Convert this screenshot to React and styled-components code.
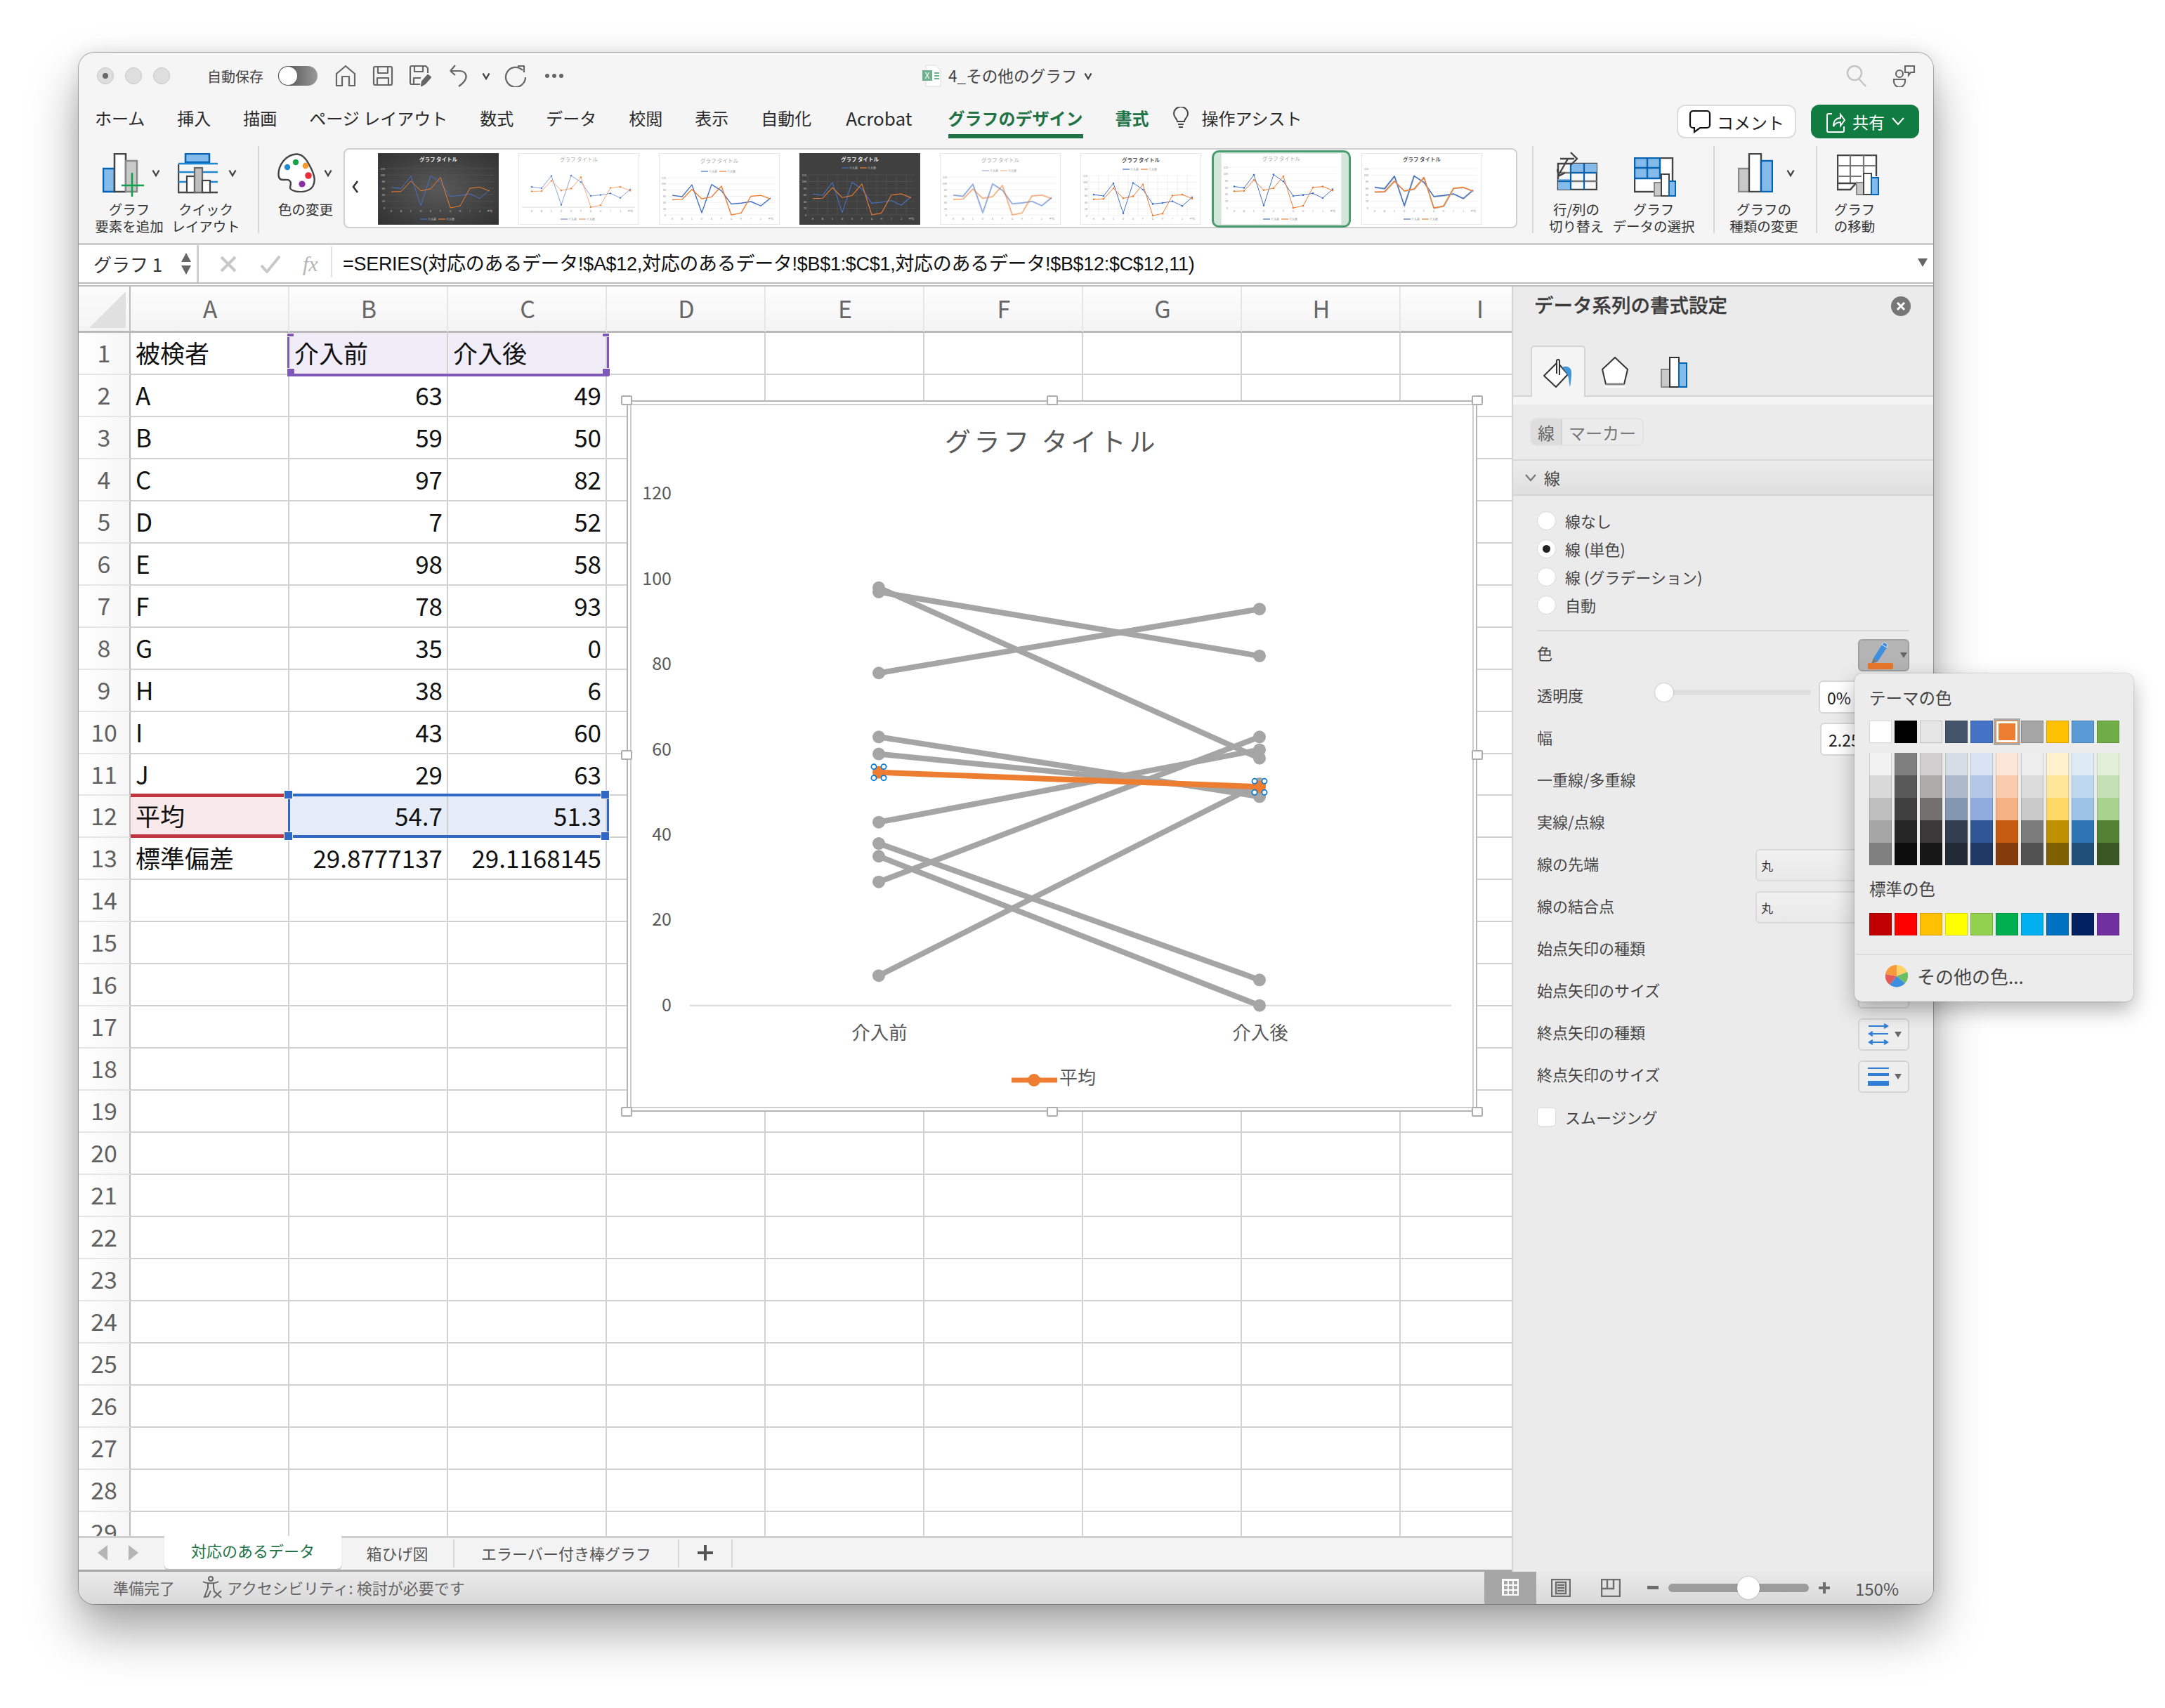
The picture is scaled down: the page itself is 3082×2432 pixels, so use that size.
import React from 'react';
import styled, { createGlobalStyle } from 'styled-components';

const GlobalStyle = createGlobalStyle`
  html, body {
    margin: 0;
    padding: 0;
    background: #fff;
    font-family: "Noto Sans CJK JP", "Noto Sans", sans-serif;
    color: #333;
  }
  * { box-sizing: border-box; }
`;

const Page = styled.div`
  width: 3082px;
  height: 2432px;
  padding: 75px 0 0 112px;
  overflow: hidden;
`;

const Window = styled.div`
  position: relative;
  width: 2640px;
  height: 2209px;
  display: flex;
  flex-direction: column;
  background: #f5f5f5;
  border-radius: 22px;
  box-shadow: 0 38px 70px rgba(0, 0, 0, 0.36), 0 0 24px rgba(0, 0, 0, 0.1), 0 0 0 1px #b9b9b9;
`;

/* title bar */
const TitleBar = styled.div`
  height: 66px;
  flex: none;
  display: flex;
  align-items: center;
  padding: 0 0 0 26px;
  position: relative;
`;

const Lights = styled.div`
  display: flex;
  gap: 16px;
`;

const Light = styled.span`
  width: 24px;
  height: 24px;
  border-radius: 50%;
  background: #dedede;
  border: 1px solid #c4c4c4;
  display: flex;
  align-items: center;
  justify-content: center;
  &::after {
    content: '';
    width: 8px;
    height: 8px;
    border-radius: 50%;
    background: ${(p) => (p.$dot ? '#666' : 'transparent')};
  }
`;

const AutoSave = styled.span`
  margin-left: 53px;
  font-size: 20px;
  color: #444;
`;

const Toggle = styled.span`
  margin-left: 21px;
  width: 56px;
  height: 28px;
  border-radius: 14px;
  background: linear-gradient(90deg, #444, #999);
  padding: 1px;
  display: flex;
  &::before {
    content: '';
    width: 26px;
    height: 26px;
    border-radius: 50%;
    background: #fff;
  }
`;

const QuickIcon = styled.span`
  display: flex;
  margin-left: ${(p) => p.$ml || 0}px;
  svg { display: block; }
`;

const DocTitle = styled.div`
  position: absolute;
  left: 1200px;
  top: 16px;
  display: flex;
  align-items: center;
  gap: 10px;
  font-size: 22.6px;
  color: #444;
  white-space: nowrap;
`;

const TitleRight = styled.div`
  margin-left: auto;
  display: flex;
  align-items: center;
  gap: 36px;
  padding-right: 24px;
`;

/* tabs */
const TabRow = styled.div`
  height: 55px;
  flex: none;
  display: flex;
  align-items: flex-start;
  gap: 46px;
  padding: 8px 20px 0 23px;
  position: relative;
`;

const RibbonTab = styled.span`
  font-size: ${(p) => p.$size || 24}px;
  line-height: 38px;
  height: 48px;
  margin-left: ${(p) => p.$ml || 0}px;
  white-space: nowrap;
  color: ${(p) => (p.$green ? '#217346' : '#2a2a2a')};
  font-weight: ${(p) => (p.$green ? 700 : 400)};
  border-bottom: ${(p) => (p.$active ? '6px solid #217346' : '0')};
`;

const Assist = styled.span`
  display: flex;
  align-items: center;
  gap: 18px;
  font-size: 24px;
  line-height: 38px;
  color: #2a2a2a;
  margin-left: -13px;
  svg { display: block; }
`;

const RightButtons = styled.div`
  margin-left: auto;
  display: flex;
  gap: 21px;
`;

const CommentButton = styled.div`
  width: 170px;
  height: 48px;
  background: #fff;
  border: 2px solid #dcdcdc;
  border-radius: 12px;
  display: flex;
  align-items: center;
  justify-content: center;
  gap: 8px;
  font-size: 24px;
  color: #222;
`;

const ShareButton = styled.div`
  width: 154px;
  height: 48px;
  background: #107c41;
  border-radius: 12px;
  display: flex;
  align-items: center;
  justify-content: center;
  gap: 10px;
  font-size: 23px;
  color: #fff;
`;

/* ribbon */
const Ribbon = styled.div`
  height: 153px;
  flex: none;
  display: flex;
  padding: 12px 0 0 22px;
  border-bottom: 3px solid #cdcdcd;
`;

const RibbonBtn = styled.div`
  width: ${(p) => p.$w}px;
  margin-left: ${(p) => p.$ml || 0}px;
  flex: none;
  display: flex;
  flex-direction: column;
  align-items: center;
`;

const IconZone = styled.div`
  width: 100%;
  height: 78px;
  padding: ${(p) => p.$top || 10}px 0 0 ${(p) => p.$left}px;
  display: flex;
  align-items: flex-start;
  svg { display: block; flex: none; }
`;

const Caret = styled.span`
  display: block;
  margin: 22px 0 0 ${(p) => p.$ml}px;
  width: 12px;
  height: 12px;
  svg { display: block; }
`;

const RibbonLabel = styled.div`
  font-size: 19.5px;
  line-height: 24px;
  text-align: center;
  color: #333;
  white-space: nowrap;
`;

const RibbonSep = styled.div`
  width: 2px;
  height: 124px;
  background: #d8d8d8;
  margin-left: ${(p) => p.$ml}px;
  flex: none;
`;

const Gallery = styled.div`
  flex: none;
  width: 1671px;
  height: 114px;
  margin: 3px 0 0 4px;
  background: #fff;
  border: 2px solid #cfcfcf;
  border-radius: 8px;
  display: flex;
  gap: 28px;
  padding-top: 5px;
`;

const GalleryPrev = styled.div`
  width: 47px;
  margin-right: -28px;
  flex: none;
  display: flex;
  align-items: center;
  justify-content: center;
  padding-right: 18px;
  padding-bottom: 10px;
  svg { display: block; }
`;

const ThumbSlot = styled.div`
  width: ${(p) => (p.$selected ? 198 : 172)}px;
  height: ${(p) => (p.$selected ? 110 : 102)}px;
  margin: ${(p) => (p.$selected ? '-4px -13px 0' : '0')};
  padding: ${(p) => (p.$selected ? '1px 10px' : '0')};
  background: ${(p) => (p.$selected ? '#d2e6da' : 'transparent')};
  border: ${(p) => (p.$selected ? '3px solid #4a9b6f' : '0')};
  border-radius: ${(p) => (p.$selected ? '10px' : '0')};
  flex: none;
  svg { display: block; }
`;

/* formula bar */
const FormulaBar = styled.div`
  height: 59px;
  flex: none;
  display: flex;
  background: #fff;
  border-bottom: 6px double #bdbdbd;
`;

const NameBox = styled.div`
  width: 171px;
  flex: none;
  display: flex;
  align-items: center;
  justify-content: space-between;
  padding: 0 8px 0 21px;
  font-size: 26px;
  color: #333;
  border-right: 3px solid #cfcfcf;
  white-space: nowrap;
`;

const Spinner = styled.span`
  display: flex;
  flex-direction: column;
  gap: 5px;
  svg { display: block; }
`;

const FormulaTools = styled.div`
  flex: none;
  width: 188px;
  padding-left: 30px;
  display: flex;
  align-items: center;
  gap: 33px;
  color: #c8c8c8;
  svg { display: block; }
`;

const FxMark = styled.span`
  font-family: "Liberation Serif", serif;
  font-style: italic;
  font-size: 30px;
  color: #b5b5b5;
  margin-left: -2px;
`;

const FormulaText = styled.div`
  flex: 1;
  display: flex;
  align-items: center;
  padding-left: 15px;
  border-left: 2px solid #e4e4e4;
  height: 44px;
  margin-top: 2px;
  font-family: "Liberation Sans", "Noto Sans CJK JP", sans-serif;
  font-size: 27px;
  letter-spacing: -0.3px;
  color: #111;
  white-space: nowrap;
  position: relative;
`;

const FormulaArrow = styled.span`
  position: absolute;
  right: 8px;
  top: 17px;
  width: 0;
  height: 0;
  border-left: 7px solid transparent;
  border-right: 7px solid transparent;
  border-top: 12px solid #666;
`;

/* main */
const Main = styled.div`
  flex: 1;
  display: flex;
  min-height: 0;
`;

const SheetColumn = styled.div`
  width: 2040px;
  flex: none;
  display: flex;
  flex-direction: column;
`;

const SheetArea = styled.div`
  position: relative;
  height: 1779px;
  flex: none;
  overflow: hidden;
  background: #fff;
`;

const CellGrid = styled.div`
  display: grid;
  grid-template-columns: 74px repeat(9, 226px);
  grid-template-rows: 66px;
  grid-auto-rows: 59.96px;
`;

const Corner = styled.div`
  background: linear-gradient(#fbfbfb, #f4f4f4);
  border-right: 2px solid #bdbdbd;
  border-bottom: 3px solid #b9b9b9;
  position: relative;
  &::after {
    content: '';
    position: absolute;
    right: 5px;
    bottom: 4px;
    width: 52px;
    height: 52px;
    background: #e0e0e0;
    clip-path: polygon(100% 0, 100% 100%, 0 100%);
  }
`;

const ColHead = styled.div`
  background: linear-gradient(#fdfdfd, #f4f4f4);
  border-right: 2px solid #e6e6e6;
  border-bottom: 3px solid #b9b9b9;
  display: flex;
  align-items: center;
  justify-content: center;
  padding: 0 0 2px 2px;
  font-size: 34px;
  color: #666;
`;

const RowHead = styled.div`
  background: linear-gradient(90deg, #fff, #f6f6f6);
  border-right: 2px solid #bdbdbd;
  border-bottom: 2px solid #e6e6e6;
  display: flex;
  align-items: center;
  justify-content: center;
  padding-bottom: 3px;
  font-size: 34px;
  color: #616161;
`;

const Cell = styled.div`
  background: ${(p) => p.$tint || '#fff'};
  border-right: 2px solid #d2d2d2;
  border-bottom: 2px solid #d2d2d2;
  display: flex;
  align-items: center;
  justify-content: ${(p) => (p.$num ? 'flex-end' : 'flex-start')};
  padding: 0 6px 3px 7px;
  font-size: 35px;
  color: #111;
  white-space: nowrap;
`;

const Range = styled.div`
  position: absolute;
  border-style: solid;
  border-color: ${(p) => p.$color};
  pointer-events: none;
`;

const RangeHandle = styled.span`
  position: absolute;
  width: ${(p) => p.$size}px;
  height: ${(p) => p.$h || p.$size}px;
  background: ${(p) => p.$color};
  outline: 1px solid #fff;
`;

/* chart */
const ChartFrame = styled.div`
  position: absolute;
  left: 780px;
  top: 162px;
  width: 1211px;
  height: 1013px;
  background: #fff;
  border: 2px solid #b4b4b4;
  padding: 3px;
`;

const ChartInner = styled.div`
  width: 100%;
  height: 100%;
  border: 2px solid #cfcfcf;
`;

const ChartSvg = styled.svg`
  position: absolute;
  left: -2px;
  top: -2px;
  display: block;
`;

const SizeHandle = styled.span`
  position: absolute;
  width: 16px;
  height: 14px;
  margin: -7px 0 0 -8px;
  background: #fff;
  border: 2px solid #adadad;
  border-radius: 2px;
`;

/* sheet tabs */
const SheetTabs = styled.div`
  flex: 1;
  display: flex;
  background: #f3f3f3;
  border-top: 3px solid #cfcfcf;
  border-bottom: 3px solid #a8a8a8;
`;

const TabArrows = styled.div`
  width: 122px;
  flex: none;
  display: flex;
  align-items: center;
  justify-content: center;
  gap: 30px;
  padding: 0 10px 4px 0;
`;

const SheetTab = styled.div`
  width: ${(p) => p.$w}px;
  flex: none;
  display: flex;
  align-items: center;
  justify-content: center;
  font-size: 22px;
  color: ${(p) => (p.$active ? '#217346' : '#555')};
  background: ${(p) => (p.$active ? '#fff' : 'transparent')};
  height: ${(p) => (p.$active ? '47px' : '40px')};
  margin-top: ${(p) => (p.$active ? '-3px' : '2px')};
  padding-bottom: ${(p) => (p.$active ? '8px' : '2px')};
  border-radius: ${(p) => (p.$active ? '0 0 6px 6px' : '0')};
  border-right: ${(p) => (p.$active ? '0' : '2px solid #d6d6d6')};
  box-shadow: ${(p) => (p.$active ? '0 2px 1px #bdbdbd' : 'none')};
  white-space: nowrap;
`;

/* format panel */
const Panel = styled.div`
  width: 600px;
  flex: none;
  position: relative;
  background: #ebebeb;
  border-left: 2px solid #d2d2d2;
  display: flex;
  flex-direction: column;
`;

const PanelHead = styled.div`
  height: 84px;
  flex: none;
  display: flex;
  justify-content: space-between;
  padding: 5px 32px 0 30px;
  font-size: 27.5px;
  font-weight: 500;
  color: #3a3a3a;
  -webkit-text-stroke: 0.3px #3a3a3a;
`;

const CloseDot = styled.span`
  width: 28px;
  height: 28px;
  margin-top: 9px;
  border-radius: 50%;
  background: #777;
  display: flex;
  svg { display: block; }
`;

const PanelTabs = styled.div`
  height: 84px;
  flex: none;
  display: flex;
  align-items: flex-start;
  padding-left: 25px;
  border-bottom: 11px solid #f4f4f4;
  position: relative;
  &::after {
    content: '';
    position: absolute;
    left: 0;
    right: 0;
    top: 71px;
    height: 2px;
    background: #d4d4d4;
  }
`;

const PanelTab = styled.div`
  width: ${(p) => p.$w}px;
  height: 73px;
  display: flex;
  align-items: flex-start;
  justify-content: center;
  padding-top: 16px;
  position: relative;
  z-index: 1;
  background: ${(p) => (p.$active ? '#f4f4f4' : 'transparent')};
  border: ${(p) => (p.$active ? '2px solid #d4d4d4' : '0')};
  border-bottom: 0;
  border-radius: 5px 5px 0 0;
  svg { display: block; }
`;

const Segment = styled.div`
  display: flex;
  align-self: flex-start;
  height: 40px;
  margin: 19px 0 0 24px;
  border: 2px solid #e2e2e2;
  border-radius: 9px;
  overflow: hidden;
  font-size: 24px;
  color: #777;
`;

const SegmentItem = styled.span`
  display: flex;
  align-items: center;
  padding: 0 9px;
  background: ${(p) => (p.$on ? '#dddddd' : 'transparent')};
  color: ${(p) => (p.$on ? '#666' : '#777')};
  border-right: ${(p) => (p.$on ? '2px solid #d4d4d4' : '0')};
`;

const SectionBar = styled.div`
  height: 52px;
  margin-top: 19px;
  flex: none;
  display: flex;
  align-items: center;
  gap: 11px;
  padding-left: 17px;
  font-size: 23px;
  color: #444;
  background: linear-gradient(#ececec, #dfdfdf);
  border-top: 2px solid #d8d8d8;
  border-bottom: 2px solid #d4d4d4;
  svg { display: block; }
`;

const RadioList = styled.div`
  padding: 15px 0 0 34px;
  flex: none;
`;

const RadioRow = styled.div`
  height: 40px;
  display: flex;
  align-items: center;
  gap: 13px;
  font-size: 22px;
  color: #444;
`;

const Radio = styled.span`
  width: 27px;
  height: 27px;
  border-radius: 50%;
  background: #fff;
  border: 1px solid #d8d8d8;
  display: flex;
  align-items: center;
  justify-content: center;
  &::after {
    content: '';
    width: 11px;
    height: 11px;
    border-radius: 50%;
    background: ${(p) => (p.$on ? '#222' : 'transparent')};
  }
`;

const PanelDivider = styled.div`
  height: 2px;
  margin: 16px 34px 0;
  background: #d8d8d8;
  flex: none;
`;

const PropRow = styled.div`
  height: 60px;
  flex: none;
  display: flex;
  align-items: center;
  padding: 0 34px;
  font-size: 22px;
  color: #444;
  white-space: nowrap;
`;

const SliderTrack = styled.div`
  position: relative;
  width: 221px;
  height: 8px;
  margin: 0 0 6px 103px;
  background: #dedede;
  border-radius: 4px;
  &::before {
    content: '';
    position: absolute;
    left: -1px;
    top: -9px;
    width: 26px;
    height: 26px;
    border-radius: 50%;
    background: #fff;
    box-shadow: 0 0 2px rgba(0, 0, 0, 0.35);
  }
`;

const Field = styled.div`
  width: 127px;
  height: 47px;
  margin: 7px 0 0 ${(p) => (p.$after ? '11px' : 'auto')};
  background: #fff;
  border: 2px solid #d6d6d6;
  border-radius: 6px;
  display: flex;
  align-items: center;
  padding-left: 10px;
  font-size: 23px;
  color: #222;
`;

const SelectBox = styled.div`
  margin: 6px 0 0 auto;
  width: 219px;
  height: 46px;
  background: linear-gradient(#f1f1f1, #e9e9e9);
  border: 2px solid #dadada;
  border-radius: 6px;
  display: flex;
  align-items: center;
  padding-left: 6px;
  font-size: 17px;
  color: #333;
`;

const PickButton = styled.div`
  margin: 8px 0 0 auto;
  width: 73px;
  height: 46px;
  background: ${(p) => (p.$pressed ? '#b4b4b4' : '#eeeeee')};
  border: 2px solid ${(p) => (p.$pressed ? '#a0a0a0' : '#d4d4d4')};
  border-radius: 6px;
  display: flex;
  align-items: center;
  padding-left: 12px;
  gap: 8px;
  svg { display: block; flex: none; }
  &::after {
    content: '';
    border-left: 5px solid transparent;
    border-right: 5px solid transparent;
    border-top: 8px solid #666;
  }
`;

const SmoothRow = styled.div`
  margin-top: 16px;
  padding-left: 34px;
  display: flex;
  align-items: center;
  gap: 13px;
  font-size: 22px;
  color: #444;
  height: 30px;
`;

const CheckBox = styled.span`
  width: 27px;
  height: 27px;
  background: #fff;
  border: 1px solid #d8d8d8;
  border-radius: 5px;
`;

/* colour popup */
const ColorPopup = styled.div`
  position: absolute;
  left: 486px;
  top: 551px;
  width: 397px;
  height: 467px;
  background: #ececec;
  border-radius: 10px;
  box-shadow: 0 12px 30px rgba(0, 0, 0, 0.3), 0 0 2px rgba(0, 0, 0, 0.3);
  padding: 19px 0 0 21px;
  z-index: 5;
`;

const PopupLabel = styled.div`
  font-size: 23.5px;
  line-height: 30px;
  color: #444;
  margin-top: ${(p) => p.$mt || 0}px;
`;

const SwatchRow = styled.div`
  display: flex;
  gap: 4px;
  margin-top: ${(p) => p.$mt}px;
`;

const Swatch = styled.span`
  width: 32px;
  height: 32px;
  flex: none;
  display: block;
  background: ${(p) => p.$c};
  box-shadow: inset 0 0 0 1px rgba(0, 0, 0, 0.16);
  ${(p) => p.$picked && 'outline: 3px solid #fff; outline-offset: -4px; box-shadow: 0 0 0 3px #a9a9a9;'}
`;

const ShadeColumn = styled.div`
  width: 32px;
  flex: none;
  box-shadow: inset 0 0 0 1px rgba(0, 0, 0, 0.12);
  display: flex;
  flex-direction: column;
`;

const Shade = styled.span`
  height: 32px;
  display: block;
  background: ${(p) => p.$c};
  box-shadow: inset 1px 0 0 rgba(0, 0, 0, 0.14), inset -1px 0 0 rgba(0, 0, 0, 0.14);
`;

const PopupDivider = styled.div`
  height: 2px;
  background: #dcdcdc;
  margin: 26px 2px 0 -19px;
`;

const MoreColors = styled.div`
  display: flex;
  align-items: center;
  gap: 13px;
  margin: 11px 0 0 23px;
  font-size: 26px;
  color: #444;
  svg { display: block; }
`;

/* status bar */
const StatusBar = styled.div`
  height: 46px;
  flex: none;
  display: flex;
  align-items: center;
  padding-left: 49px;
  background: linear-gradient(#eaeaea, #d9d9d9);
  border-radius: 0 0 22px 22px;
  font-size: 22px;
  color: #666;
  white-space: nowrap;
`;

const StatusCaption = styled.span`
  margin-top: -2px;
`;

const StatusA11y = styled.span`
  display: flex;
  align-items: center;
  gap: 6px;
  margin: -2px 0 0 38px;
  svg { display: block; }
`;

const StatusRight = styled.div`
  margin-left: auto;
  display: flex;
  align-items: center;
  height: 100%;
  padding-right: 49px;
`;

const ViewBtn = styled.span`
  width: ${(p) => p.$w}px;
  height: ${(p) => (p.$on ? '48px' : '46px')};
  margin-top: ${(p) => (p.$on ? '-2px' : '0')};
  background: ${(p) => (p.$on ? '#a6a6a6' : 'transparent')};
  display: flex;
  align-items: center;
  justify-content: center;
  svg { display: block; }
`;

const ZoomMark = styled.span`
  width: 16px;
  margin-left: ${(p) => p.$ml}px;
  display: flex;
  svg { display: block; }
`;

const ZoomTrack = styled.span`
  position: relative;
  width: 200px;
  height: 12px;
  margin-left: 14px;
  border-radius: 6px;
  background: #9c9c9c;
  &::after {
    content: '';
    position: absolute;
    left: 98px;
    top: -10px;
    width: 32px;
    height: 32px;
    border-radius: 50%;
    background: #fff;
    box-shadow: 0 0 2px rgba(0, 0, 0, 0.35);
  }
`;

const ZoomPct = styled.span`
  margin-left: 36px;
  font-size: 24px;
  color: #555;
`;

/* data */
const before = [63, 59, 97, 7, 98, 78, 35, 38, 43, 29];
const after = [49, 50, 82, 52, 58, 93, 0, 6, 60, 63];
const names = ['A', 'B', 'C', 'D', 'E', 'F', 'G', 'H', 'I', 'J'];
const colHeads = ['A', 'B', 'C', 'D', 'E', 'F', 'G', 'H', 'I'];

const tableRows = [
  ['被検者', '介入前', '介入後'],
  ...names.map((n, i) => [n, before[i], after[i]]),
  ['平均', 54.7, 51.3],
  ['標準偏差', '29.8777137', '29.1168145'],
];

const themeColors = [
  ['#ffffff', '#f2f2f2', '#d9d9d9', '#bfbfbf', '#a6a6a6', '#808080'],
  ['#000000', '#7f7f7f', '#595959', '#3f3f3f', '#262626', '#0d0d0d'],
  ['#e7e6e6', '#d0cece', '#aeabab', '#757070', '#3a3838', '#171717'],
  ['#44546a', '#d6dce5', '#adb9ca', '#8497b0', '#333f50', '#222a35'],
  ['#4472c4', '#dae3f3', '#b4c7e7', '#8faadc', '#2f5597', '#203864'],
  ['#ed7d31', '#fbe5d6', '#f8cbad', '#f4b183', '#c55a11', '#843c0c'],
  ['#a5a5a5', '#ededed', '#dbdbdb', '#c9c9c9', '#7b7b7b', '#525252'],
  ['#ffc000', '#fff2cc', '#ffe699', '#ffd966', '#bf9000', '#7f6000'],
  ['#5b9bd5', '#deebf7', '#bdd7ee', '#9dc3e6', '#2e75b6', '#1f4e79'],
  ['#70ad47', '#e2f0d9', '#c5e0b4', '#a9d18e', '#548235', '#385723'],
];

const standardColors = ['#c00000', '#ff0000', '#ffc000', '#ffff00', '#92d050', '#00b050', '#00b0f0', '#0070c0', '#002060', '#7030a0'];

const thumbs = [
  { dark: true, titleY: 9, top: 22, zero: 78, labelY: 84, legendY: 94, lw: 1, bold: true },
  { titleY: 9, top: 22, zero: 77, labelY: 84, legendY: 94, lw: 0.8, faint: true, points: true, noAxis: true },
  { titleY: 11, top: 35, zero: 88, labelY: 95, legendY: 26, lw: 1.4, dense: true },
  { dark: true, titleY: 9, top: 31, zero: 88, labelY: 95, legendY: 21, lw: 1.1, bold: true, box: true, flat: true },
  { titleY: 10, top: 34, zero: 88, labelY: 95, legendY: 25, lw: 2, pale: true, dense: true },
  { titleY: 10, top: 32, zero: 89, labelY: 95, legendY: 23, lw: 1, bold: true, vertical: true, points: true },
  { titleY: 8, top: 20, zero: 78, labelY: 84, legendY: 94, lw: 1, points: true, selected: true },
  { titleY: 9, top: 22, zero: 78, labelY: 84, legendY: 94, lw: 1.5, bold: true, shadow: true },
];

const BLUE = '#4472c4';
const ORANGE = '#ed7d31';

const Thumb = ({ cfg }) => {
  const xAt = (i) => 19 + i * 14;
  const yAt = (v) => cfg.zero - (v * (cfg.zero - cfg.top)) / 120;
  const series = [[...before, 54.7], [...after, 51.3]];
  const txt = cfg.dark ? '#cfcfcf' : '#8a8a8a';
  const grid = cfg.dark ? '#555' : '#ececec';
  const ticks = [0, 20, 40, 60, 80, 100, 120];
  const cats = [...names, '平均'];
  let lineOpacity = 1;
  if (cfg.pale) lineOpacity = 0.55;
  if (cfg.faint) lineOpacity = 0.8;
  return (
    <svg width="172" height="102" viewBox="0 0 172 102">
      <defs>
        <radialGradient id="darkBg" cx="50%" cy="50%" r="70%">
          <stop offset="0" stopColor="#595959" />
          <stop offset="1" stopColor="#323232" />
        </radialGradient>
      </defs>
      <rect
        x="0.5"
        y="0.5"
        width="171"
        height="101"
        fill={cfg.dark ? (cfg.flat ? '#404040' : 'url(#darkBg)') : '#fff'}
        stroke={cfg.dark ? '#404040' : '#e8e8e8'}
      />
      <text x="86" y={cfg.titleY + 3} textAnchor="middle" fontSize="7.5" fontWeight={cfg.bold ? 700 : 400} fill={cfg.dark ? '#eee' : cfg.bold ? '#555' : '#aaa'}>グラフ タイトル</text>
      {!cfg.noAxis && ticks.map((t) => (
        <g key={t}>
          <line x1="13" x2="165" y1={yAt(t)} y2={yAt(t)} stroke={grid} strokeWidth={cfg.dense ? 0.8 : 0.7} />
          <text x="10" y={yAt(t) + 1.5} textAnchor="end" fontSize="3.8" fill={txt}>{t}</text>
        </g>
      ))}
      {cfg.noAxis && <line x1="5" x2="166" y1={cfg.zero} y2={cfg.zero} stroke="#ededed" strokeWidth="2" />}
      {cfg.vertical && cats.map((c, i) => (
        <line key={c} x1={xAt(i) - 7} x2={xAt(i) - 7} y1={cfg.top} y2={cfg.zero} stroke="#e6e6e6" strokeWidth="0.7" />
      ))}
      {cfg.box && cats.map((c, i) => (
        <line key={c} x1={xAt(i) - 7} x2={xAt(i) - 7} y1={cfg.top} y2={cfg.zero} stroke="#555" strokeWidth="0.6" />
      ))}
      {cats.map((c, i) => (
        <text key={c} x={xAt(i)} y={cfg.labelY} textAnchor="middle" fontSize="3.8" fill={txt}>{c}</text>
      ))}
      {series.map((vals, s) => {
        const color = s === 0 ? BLUE : ORANGE;
        const pts = vals.map((v, i) => `${xAt(i)},${yAt(v)}`).join(' ');
        return (
          <g key={color}>
            {cfg.shadow && <polyline points={vals.map((v, i) => `${xAt(i) + 0.6},${yAt(v) + 0.8}`).join(' ')} fill="none" stroke="#bbb" strokeWidth={cfg.lw} />}
            <polyline points={pts} fill="none" stroke={color} strokeWidth={cfg.lw} strokeOpacity={lineOpacity} strokeLinejoin="round" />
            {cfg.points && vals.map((v, i) => (
              <circle key={i} cx={xAt(i)} cy={yAt(v)} r="1.3" fill={color} fillOpacity={lineOpacity} />
            ))}
          </g>
        );
      })}
      <line x1="60" x2="70" y1={cfg.legendY} y2={cfg.legendY} stroke={BLUE} strokeWidth="1.2" strokeOpacity={lineOpacity} />
      <text x="71" y={cfg.legendY + 1.5} fontSize="4" fill={txt}>介入前</text>
      <line x1="86" x2="96" y1={cfg.legendY} y2={cfg.legendY} stroke={ORANGE} strokeWidth="1.2" strokeOpacity={lineOpacity} />
      <text x="97" y={cfg.legendY + 1.5} fontSize="4" fill={txt}>介入後</text>
    </svg>
  );
};

/* icons */
const CaretDown = () => (
  <svg width="12" height="12" viewBox="0 0 12 12"><path d="M1.5 2.5 6 10l4.5-7.5" fill="none" stroke="#444" strokeWidth="2.4" /></svg>
);

const ChartAddIcon = () => (
  <svg width="60" height="62" viewBox="0 0 60 62">
    <rect x="1" y="22" width="16" height="33" fill="#85bbea" stroke="#0563b4" strokeWidth="2.5" />
    <rect x="17" y="1" width="16" height="54" fill="#fff" stroke="#444" strokeWidth="2.5" />
    <rect x="33" y="11" width="16" height="44" fill="#c9c9c9" stroke="#8a8a8a" strokeWidth="2.5" />
    <path d="M42 28v34M27 46h32" stroke="#10a14e" strokeWidth="2.6" />
  </svg>
);

const QuickLayoutIcon = () => (
  <svg width="58" height="58" viewBox="0 0 58 58">
    <rect x="11" y="1" width="34" height="12" fill="#85bbea" stroke="#0563b4" strokeWidth="2.5" />
    <path d="M1 16v40h56" fill="none" stroke="#444" strokeWidth="2.5" />
    <path d="M1 27h56M1 41h56M1 15h56" stroke="#1e88d0" strokeWidth="2.6" />
    <rect x="13" y="33" width="11" height="23" fill="#fff" stroke="#444" strokeWidth="2.2" />
    <rect x="24" y="21" width="11" height="35" fill="#c0c0c0" stroke="#666" strokeWidth="2.2" />
    <rect x="35" y="39" width="11" height="17" fill="#fff" stroke="#444" strokeWidth="2.2" />
  </svg>
);

const PaletteIcon = () => (
  <svg width="56" height="56" viewBox="0 0 56 56">
    <path d="M27 1.5C12 2 1.5 17 1.5 30c0 5 2 8 6 8 6 0 9-1 11 3 2 5-4 9 3 12 7 3 23 4 29-6 4-8 2-15-2-24C44 14 38 1 27 1.5z" fill="#fff" stroke="#444" strokeWidth="2.4" />
    <circle cx="14" cy="20" r="4.2" fill="#1f8ad0" />
    <circle cx="26" cy="13" r="4.2" fill="#15a34a" />
    <circle cx="40" cy="18" r="4.4" fill="#f59a2f" />
    <circle cx="44" cy="32" r="4.8" fill="#e8303c" />
    <circle cx="35" cy="44" r="4.6" fill="#8a2fa8" />
  </svg>
);

const SwitchIcon = () => (
  <svg width="58" height="56" viewBox="0 0 58 56">
    <rect x="2" y="18" width="55" height="37" fill="#f7f7f7" stroke="#444" strokeWidth="2.5" />
    <path d="M20 18h37v13H20zM2 40h18v15H2z" fill="#85bbea" />
    <path d="M2 31h55M2 43h55" stroke="#777" strokeWidth="2.4" />
    <path d="M20 31h37M2 43h18M20 18v37M39 18v37" stroke="#0563b4" strokeWidth="2.2" />
    <path d="M5 11h20M20 2l9 9-9 9M16 11 4 32M0 26l4 9 8-4" fill="none" stroke="#444" strokeWidth="2.4" />
  </svg>
);

const SelectDataIcon = () => (
  <svg width="60" height="56" viewBox="0 0 60 56">
    <rect x="1" y="1" width="54" height="48" fill="#fff" stroke="#444" strokeWidth="2.4" />
    <path d="M1 1h36v29H1z" fill="#85bbea" stroke="#0563b4" strokeWidth="2.4" />
    <path d="M19 1v29M1 15h36" stroke="#0563b4" strokeWidth="2.4" />
    <rect x="29" y="36" width="11" height="19" fill="#c9c9c9" stroke="#888" strokeWidth="2" />
    <rect x="39" y="24" width="11" height="31" fill="#fff" stroke="#444" strokeWidth="2" />
    <rect x="50" y="34" width="9" height="21" fill="#85bbea" stroke="#0563b4" strokeWidth="2" />
  </svg>
);

const ChartTypeIcon = () => (
  <svg width="50" height="56" viewBox="0 0 50 56">
    <rect x="1" y="22" width="16" height="33" fill="#c9c9c9" stroke="#888" strokeWidth="2.4" />
    <rect x="16" y="1" width="17" height="54" fill="#fff" stroke="#444" strokeWidth="2.4" />
    <rect x="33" y="11" width="16" height="44" fill="#85bbea" stroke="#0563b4" strokeWidth="2.4" />
  </svg>
);

const MoveChartIcon = () => (
  <svg width="60" height="58" viewBox="0 0 60 58">
    <path d="M1 49V1h55v30" fill="#fff" stroke="#444" strokeWidth="2.4" />
    <path d="M19 1v42M38 1v26M1 16h55M1 31h34" stroke="#777" strokeWidth="2.2" />
    <path d="M1 41h26l-8 9H1z" fill="#fff" stroke="#444" strokeWidth="2.4" />
    <rect x="28" y="40" width="11" height="17" fill="#c9c9c9" stroke="#888" strokeWidth="2" />
    <rect x="38" y="27" width="11" height="30" fill="#fff" stroke="#444" strokeWidth="2" />
    <rect x="49" y="33" width="10" height="24" fill="#85bbea" stroke="#0563b4" strokeWidth="2" />
  </svg>
);

const Stroke = ({ w, h, children }) => (
  <svg width={w} height={h} viewBox={`0 0 ${w} ${h}`} fill="none" stroke="#666" strokeWidth="2.2" strokeLinejoin="round">{children}</svg>
);

const QuickBar = () => (
  <>
    <QuickIcon $ml={25}>
      <Stroke w={30} h={32}><path d="M2 30V13L15 2l13 11v17h-8V17H10v13z" /></Stroke>
    </QuickIcon>
    <QuickIcon $ml={23}>
      <Stroke w={30} h={30}><path d="M4 2h22a2 2 0 0 1 2 2v22a2 2 0 0 1-2 2H4a2 2 0 0 1-2-2V4a2 2 0 0 1 2-2zM8 2v9h14V2M7 28V18h16v10" /></Stroke>
    </QuickIcon>
    <QuickIcon $ml={22}>
      <Stroke w={32} h={32}>
        <path d="M16 28H4a2 2 0 0 1-2-2V4a2 2 0 0 1 2-2h20l3 3v7M8 2v8h12V2M7 28v-9h10" />
        <path d="M18 30l1-6 8-9 4 3-8 9z" fill="#666" />
      </Stroke>
    </QuickIcon>
    <QuickIcon $ml={24}>
      <Stroke w={30} h={34}><path d="M3 10 10 2M3 10h13c8 0 11 6 9 11-2 5-7 9-10 11M3 10l7 6" /></Stroke>
    </QuickIcon>
    <QuickIcon $ml={18}><CaretDown /></QuickIcon>
    <QuickIcon $ml={20}>
      <Stroke w={34} h={32}><path d="M26 8a14 14 0 1 0 4 10M19 2h9v9" /></Stroke>
    </QuickIcon>
    <QuickIcon $ml={23}>
      <svg width="28" height="8" viewBox="0 0 28 8"><circle cx="4" cy="4" r="3" fill="#666" /><circle cx="14" cy="4" r="3" fill="#666" /><circle cx="24" cy="4" r="3" fill="#666" /></svg>
    </QuickIcon>
  </>
);

const ExcelDocIcon = () => (
  <svg width="28" height="32" viewBox="0 0 28 32">
    <path d="M6 1h14l7 7v23H6z" fill="#fff" stroke="#ddd" />
    <rect x="1" y="8" width="14" height="15" fill="#6fb08f" />
    <text x="8" y="20" fontSize="12" fill="#fff" textAnchor="middle">X</text>
    <path d="M18 11h7v2h-7zM18 15h7v2h-7zM18 19h7v2h-7z" fill="#6fb08f" />
  </svg>
);

const BucketIcon = () => (
  <svg width="44" height="42" viewBox="0 0 44 42">
    <path d="M2 25 21 6l15 17-17 18z" fill="#fff" stroke="#333" strokeWidth="2" strokeLinejoin="round" />
    <path d="M20 22V4a2 2 0 0 1 4 0v20" fill="#fff" stroke="#333" strokeWidth="2" />
    <path d="M28 13c6-3 13 0 13 7 0 8-1 16-2 21-2-6-1-15-5-20-2-3-4-5-6-8z" fill="#3f96d8" />
  </svg>
);

const PentagonIcon = () => (
  <svg width="40" height="44" viewBox="0 0 40 44">
    <path d="M20 1 38 18l-5 21H7L2 18z" fill="#fff" stroke="#333" strokeWidth="2" strokeLinejoin="round" />
    <path d="M7 39H33l2 5H5z" fill="#fafafa" />
    <path d="M7 39h26" stroke="#888" strokeWidth="3" />
  </svg>
);

const BarsIcon = () => (
  <svg width="38" height="44" viewBox="0 0 38 44">
    <rect x="1" y="18" width="13" height="25" fill="#c9c9c9" stroke="#888" strokeWidth="2" />
    <rect x="13" y="1" width="13" height="42" fill="#fff" stroke="#333" strokeWidth="2" />
    <rect x="26" y="9" width="11" height="34" fill="#85bbea" stroke="#0563b4" strokeWidth="2" />
  </svg>
);

const PenIcon = () => (
  <svg width="38" height="40" viewBox="0 0 38 40">
    <path d="M8 24 20 5l7 4-13 20z" fill="#3f8fe0" />
    <path d="M20 5l2-3c1-1 5 1 6 3l-1 4z" fill="#3f8fe0" stroke="#eaeaea" strokeWidth="1" />
    <path d="M8 24l6 5-9 3z" fill="#777" />
    <rect x="0" y="31" width="36" height="9" rx="2" fill="#e8782a" />
  </svg>
);

const ArrowKindsIcon = () => (
  <svg width="30" height="32" viewBox="0 0 30 32" fill="none" stroke="#2f7fd6" strokeWidth="2.2">
    <path d="M1 4h27M23 1l5 3-5 3" />
    <path d="M29 15H2M7 12l-5 3 5 3" />
    <path d="M2 27h26M7 24l-5 3 5 3M23 24l5 3-5 3" />
  </svg>
);

const SizeLinesIcon = () => (
  <svg width="30" height="28" viewBox="0 0 30 28" fill="#2f7fd6">
    <rect y="1" width="30" height="2" />
    <rect y="9" width="30" height="4" />
    <rect y="20" width="30" height="7" />
  </svg>
);

const WheelIcon = () => (
  <svg width="32" height="32" viewBox="0 0 32 32">
    <path d="M16 16V0a16 16 0 0 1 15 10z" fill="#ffd166" />
    <path d="M16 16 31 10a16 16 0 0 1-3 16z" fill="#6abf63" />
    <path d="M16 16l12 10A16 16 0 0 1 6 28z" fill="#3f8fe0" />
    <path d="M16 16 6 28A16 16 0 0 1 0 13z" fill="#e25a5a" />
    <path d="M16 16 0 13A16 16 0 0 1 16 0z" fill="#f79a3e" />
  </svg>
);

const ChartView = () => {
  const yAt = (v) => 1431.7 - v * 6.07;
  const x1 = 1251;
  const x2 = 1793;
  const lines = before.map((b, i) => [b, after[i]]);
  const anchors = [[x1, yAt(54.7)], [x2, yAt(51.3)]];
  return (
    <ChartSvg width="1211" height="1015" viewBox="892 570 1211 1015">
      <text x="1497" y="643" textAnchor="middle" fontSize="37" letterSpacing="4.6" fill="#595959">グラフ タイトル</text>
      {[0, 20, 40, 60, 80, 100, 120].map((t) => (
        <text key={t} x="956" y={yAt(t) + 8} textAnchor="end" fontSize="25" fill="#595959">{t}</text>
      ))}
      <line x1="982" x2="2066" y1="1431.7" y2="1431.7" stroke="#d9d9d9" strokeWidth="2" />
      <text x="1252" y="1480" textAnchor="middle" fontSize="26.5" fill="#595959">介入前</text>
      <text x="1794" y="1480" textAnchor="middle" fontSize="26.5" fill="#595959">介入後</text>
      {lines.map(([a, b]) => (
        <g key={`${a}-${b}`}>
          <line x1={x1} x2={x2} y1={yAt(a)} y2={yAt(b)} stroke="#a5a5a5" strokeWidth="8" />
          <circle cx={x1} cy={yAt(a)} r="9" fill="#a5a5a5" />
          <circle cx={x2} cy={yAt(b)} r="9" fill="#a5a5a5" />
        </g>
      ))}
      <line x1={x1} x2={x2} y1={yAt(54.7)} y2={yAt(51.3)} stroke="#ed7d31" strokeWidth="8" />
      {anchors.map(([cx, cy]) => (
        <g key={cx}>
          <circle cx={cx} cy={cy} r="9" fill="#ed7d31" />
          {[[-7, -8], [7, -8], [-7, 8], [7, 8]].map(([dx, dy]) => (
            <circle key={`${dx}${dy}`} cx={cx + dx} cy={cy + dy} r="3.6" fill="#fff" stroke="#0a7bd0" strokeWidth="1.8" />
          ))}
        </g>
      ))}
      <line x1="1440" x2="1505" y1="1538" y2="1538" stroke="#ed7d31" strokeWidth="7" />
      <circle cx="1472" cy="1538" r="9" fill="#ed7d31" />
      <text x="1508" y="1544" fontSize="26" fill="#595959">平均</text>
    </ChartSvg>
  );
};

const handleSpots = [
  [0, 0], [605.5, 0], [1211, 0],
  [0, 505], [1211, 505],
  [0, 1013], [605.5, 1013], [1211, 1013],
];

const SheetRange = ({ x, y, w, h, color, thick, sides, handles }) => (
  <Range
    $color={color}
    style={{
      left: x,
      top: y,
      width: w,
      height: h,
      borderWidth: `${thick}px ${sides}px ${thick}px ${sides}px`,
    }}
  >
    {handles.map(([hx, hy, size, hh]) => (
      <RangeHandle key={`${hx}${hy}`} $size={size} $h={hh} $color={color} style={{ left: hx, top: hy }} />
    ))}
  </Range>
);

const App = () => (
  <Page>
    <GlobalStyle />
    <Window>
      <TitleBar>
        <Lights>
          <Light $dot />
          <Light />
          <Light />
        </Lights>
        <AutoSave>自動保存</AutoSave>
        <Toggle />
        <QuickBar />
        <DocTitle>
          <ExcelDocIcon />
          <span>4_その他のグラフ</span>
          <CaretDown />
        </DocTitle>
        <TitleRight>
          <svg width="30" height="32" viewBox="0 0 30 32" fill="none" stroke="#c4c4c4" strokeWidth="2.4">
            <circle cx="12" cy="12" r="10" />
            <path d="M18 20l10 11" />
          </svg>
          <svg width="34" height="32" viewBox="0 0 34 32" fill="none" stroke="#666" strokeWidth="2.2">
            <circle cx="10" cy="13" r="5" />
            <path d="M2 21h16v3a7 7 0 0 1-16 0z" />
            <path d="M18 2h13v9h-5l-3 4v-4h-5z" />
          </svg>
        </TitleRight>
      </TitleBar>

      <TabRow>
        {['ホーム', '挿入', '描画', 'ページ レイアウト', '数式', 'データ', '校閲', '表示', '自動化'].map((t) => (
          <RibbonTab key={t}>{t}</RibbonTab>
        ))}
        <RibbonTab $size={26} $ml={3}>Acrobat</RibbonTab>
        <RibbonTab $green $active $ml={5}>グラフのデザイン</RibbonTab>
        <RibbonTab $green>書式</RibbonTab>
        <Assist>
          <svg width="24" height="32" viewBox="0 0 24 32" fill="none" stroke="#444" strokeWidth="2">
            <path d="M7 21c0-4-5-6-5-11a10 10 0 0 1 20 0c0 5-5 7-5 11z" />
            <path d="M8 25h8M9 29h6" />
          </svg>
          操作アシスト
        </Assist>
        <RightButtons>
          <CommentButton>
            <svg width="32" height="34" viewBox="0 0 32 34" fill="none" stroke="#111" strokeWidth="2.2">
              <path d="M6 2h20a4 4 0 0 1 4 4v16a4 4 0 0 1-4 4H16l-8 6v-6H6a4 4 0 0 1-4-4V6a4 4 0 0 1 4-4z" />
            </svg>
            コメント
          </CommentButton>
          <ShareButton>
            <svg width="28" height="34" viewBox="0 0 28 34" fill="none" stroke="#fff" strokeWidth="2">
              <path d="M9 6H4a2 2 0 0 0-2 2v22a2 2 0 0 0 2 2h20a2 2 0 0 0 2-2v-6" />
              <path d="M11 24c0-8 4-12 10-12V7l6 8-6 8v-5c-4 0-8 2-10 6z" />
            </svg>
            共有
            <svg width="18" height="12" viewBox="0 0 18 12" fill="none" stroke="#fff" strokeWidth="2"><path d="M1 1l8 9 8-9" /></svg>
          </ShareButton>
        </RightButtons>
      </TabRow>

      <Ribbon>
        <RibbonBtn $w={100}>
          <IconZone $left={12}><ChartAddIcon /><Caret $ml={10}><CaretDown /></Caret></IconZone>
          <RibbonLabel>グラフ<br />要素を追加</RibbonLabel>
        </RibbonBtn>
        <RibbonBtn $w={100} $ml={9}>
          <IconZone $left={10}><QuickLayoutIcon /><Caret $ml={14}><CaretDown /></Caret></IconZone>
          <RibbonLabel>クイック<br />レイアウト</RibbonLabel>
        </RibbonBtn>
        <RibbonSep $ml={24} />
        <RibbonBtn $w={100} $ml={16}>
          <IconZone $left={10}><PaletteIcon /><Caret $ml={10}><CaretDown /></Caret></IconZone>
          <RibbonLabel>色の変更</RibbonLabel>
        </RibbonBtn>
        <Gallery>
          <GalleryPrev>
            <svg width="10" height="20" viewBox="0 0 10 20" fill="none" stroke="#333" strokeWidth="2.6"><path d="M8 2 2 10l6 8" /></svg>
          </GalleryPrev>
          {thumbs.map((cfg, i) => (
            <ThumbSlot key={i} $selected={cfg.selected}>
              <Thumb cfg={cfg} />
            </ThumbSlot>
          ))}
        </Gallery>
        <RibbonSep $ml={21} />
        <RibbonBtn $w={110} $ml={6}>
          <IconZone $left={27} $top={7}><SwitchIcon /></IconZone>
          <RibbonLabel>行/列の<br />切り替え</RibbonLabel>
        </RibbonBtn>
        <RibbonBtn $w={110}>
          <IconZone $left={27} $top={16}><SelectDataIcon /></IconZone>
          <RibbonLabel>グラフ<br />データの選択</RibbonLabel>
        </RibbonBtn>
        <RibbonSep $ml={30} />
        <RibbonBtn $w={110} $ml={15}>
          <IconZone $left={18}><ChartTypeIcon /><Caret $ml={19}><CaretDown /></Caret></IconZone>
          <RibbonLabel>グラフの<br />種類の変更</RibbonLabel>
        </RibbonBtn>
        <RibbonSep $ml={19} />
        <RibbonBtn $w={80} $ml={13}>
          <IconZone $left={15} $top={12}><MoveChartIcon /></IconZone>
          <RibbonLabel>グラフ<br />の移動</RibbonLabel>
        </RibbonBtn>
      </Ribbon>

      <FormulaBar>
        <NameBox>
          グラフ 1
          <Spinner>
            <svg width="14" height="13" viewBox="0 0 14 13"><path d="M7 0l7 13H0z" fill="#666" /></svg>
            <svg width="14" height="13" viewBox="0 0 14 13"><path d="M7 13 14 0H0z" fill="#666" /></svg>
          </Spinner>
        </NameBox>
        <FormulaTools>
          <svg width="24" height="24" viewBox="0 0 24 24" fill="none" stroke="currentColor" strokeWidth="4"><path d="M2 2l20 20M22 2 2 22" /></svg>
          <svg width="30" height="26" viewBox="0 0 30 26" fill="none" stroke="currentColor" strokeWidth="4"><path d="M2 15l8 9L28 2" /></svg>
          <FxMark>fx</FxMark>
        </FormulaTools>
        <FormulaText>
          =SERIES(対応のあるデータ!$A$12,対応のあるデータ!$B$1:$C$1,対応のあるデータ!$B$12:$C$12,11)
          <FormulaArrow />
        </FormulaText>
      </FormulaBar>

      <Main>
        <SheetColumn>
          <SheetArea>
            <CellGrid>
              <Corner />
              {colHeads.map((c) => <ColHead key={c}>{c}</ColHead>)}
              {Array.from({ length: 29 }, (_, r) => {
                const row = tableRows[r] || [];
                return (
                  <React.Fragment key={r}>
                    <RowHead>{r + 1}</RowHead>
                    {colHeads.map((c, ci) => {
                      const value = row[ci];
                      let tint;
                      if (r === 0 && (ci === 1 || ci === 2)) tint = '#f0edf8';
                      if (r === 11 && ci === 0) tint = '#f9e9ea';
                      if (r === 11 && (ci === 1 || ci === 2)) tint = '#e6edf8';
                      const isNum = ci > 0 && r > 0;
                      return <Cell key={c} $num={isNum} $tint={tint}>{value}</Cell>;
                    })}
                  </React.Fragment>
                );
              })}
            </CellGrid>

            <SheetRange
              x={297}
              y={66}
              w={458}
              h={62}
              color="#7e57b8"
              thick={0}
              sides={3}
              handles={[[-3, 1, 9, 4], [446, 1, 9, 4], [-3, 51, 10, 10], [446, 51, 10, 10]]}
            />
            <Range $color="#7e57b8" style={{ left: 297, top: 124, width: 458, height: 4, borderWidth: '4px 0 0' }} />
            <Range $color="#c0353f" style={{ left: 74, top: 722, width: 223, height: 63, borderWidth: '5px 0' }} />
            <SheetRange
              x={298}
              y={722}
              w={457}
              h={63}
              color="#2f69c5"
              thick={4}
              sides={3}
              handles={[[-8, -8, 11], [443, -8, 11], [-8, 51, 11], [443, 51, 11]]}
            />

            <ChartFrame>
              <ChartInner />
              <ChartView />
              {handleSpots.map(([x, y]) => (
                <SizeHandle key={`${x}-${y}`} style={{ left: x - 2, top: y - 2 }} />
              ))}
            </ChartFrame>
          </SheetArea>

          <SheetTabs>
            <TabArrows>
              <svg width="14" height="22" viewBox="0 0 14 22"><path d="M14 0v22L0 11z" fill="#b5b5b5" /></svg>
              <svg width="14" height="22" viewBox="0 0 14 22"><path d="M0 0v22l14-11z" fill="#b5b5b5" /></svg>
            </TabArrows>
            <SheetTab $active $w={252}>対応のあるデータ</SheetTab>
            <SheetTab $w={161}>箱ひげ図</SheetTab>
            <SheetTab $w={320}>エラーバー付き棒グラフ</SheetTab>
            <SheetTab $w={76}>
              <svg width="22" height="22" viewBox="0 0 22 22"><path d="M11 0v22M0 11h22" stroke="#555" strokeWidth="4" /></svg>
            </SheetTab>
          </SheetTabs>
        </SheetColumn>

        <Panel>
          <PanelHead>
            データ系列の書式設定
            <CloseDot>
              <svg width="28" height="28" viewBox="0 0 28 28"><path d="M9 9l10 10M19 9 9 19" stroke="#fff" strokeWidth="3" /></svg>
            </CloseDot>
          </PanelHead>
          <PanelTabs>
            <PanelTab $active $w={78}><BucketIcon /></PanelTab>
            <PanelTab $w={84}><PentagonIcon /></PanelTab>
            <PanelTab $w={84}><BarsIcon /></PanelTab>
          </PanelTabs>
          <Segment>
            <SegmentItem $on>線</SegmentItem>
            <SegmentItem>マーカー</SegmentItem>
          </Segment>
          <SectionBar>
            <svg width="16" height="12" viewBox="0 0 16 12" fill="none" stroke="#777" strokeWidth="2.2"><path d="M1 2l7 8 7-8" /></svg>
            線
          </SectionBar>
          <RadioList>
            <RadioRow><Radio />線なし</RadioRow>
            <RadioRow><Radio $on />線 (単色)</RadioRow>
            <RadioRow><Radio />線 (グラデーション)</RadioRow>
            <RadioRow><Radio />自動</RadioRow>
          </RadioList>
          <PanelDivider />
          <PropRow>
            色
            <PickButton $pressed><PenIcon /></PickButton>
          </PropRow>
          <PropRow>
            透明度
            <SliderTrack />
            <Field $after>0%</Field>
          </PropRow>
          <PropRow>
            幅
            <Field>2.25 pt</Field>
          </PropRow>
          <PropRow>一重線/多重線<PickButton><SizeLinesIcon /></PickButton></PropRow>
          <PropRow>実線/点線<PickButton><SizeLinesIcon /></PickButton></PropRow>
          <PropRow>線の先端<SelectBox>丸</SelectBox></PropRow>
          <PropRow>線の結合点<SelectBox>丸</SelectBox></PropRow>
          <PropRow>始点矢印の種類<PickButton><ArrowKindsIcon /></PickButton></PropRow>
          <PropRow>始点矢印のサイズ<PickButton><SizeLinesIcon /></PickButton></PropRow>
          <PropRow>終点矢印の種類<PickButton><ArrowKindsIcon /></PickButton></PropRow>
          <PropRow>終点矢印のサイズ<PickButton><SizeLinesIcon /></PickButton></PropRow>
          <SmoothRow><CheckBox />スムージング</SmoothRow>

          <ColorPopup>
            <PopupLabel>テーマの色</PopupLabel>
            <SwatchRow $mt={18}>
              {themeColors.map((col) => (
                <Swatch key={col[0]} $c={col[0]} $picked={col[0] === '#ed7d31'} />
              ))}
            </SwatchRow>
            <SwatchRow $mt={14}>
              {themeColors.map((col) => (
                <ShadeColumn key={col[0]}>
                  {col.slice(1).map((c) => <Shade key={c} $c={c} />)}
                </ShadeColumn>
              ))}
            </SwatchRow>
            <PopupLabel $mt={18}>標準の色</PopupLabel>
            <SwatchRow $mt={20}>
              {standardColors.map((c) => <Swatch key={c} $c={c} />)}
            </SwatchRow>
            <PopupDivider />
            <MoreColors><WheelIcon />その他の色...</MoreColors>
          </ColorPopup>
        </Panel>
      </Main>

      <StatusBar>
        <StatusCaption>準備完了</StatusCaption>
        <StatusA11y>
          <svg width="30" height="32" viewBox="0 0 30 32" fill="none" stroke="#666" strokeWidth="2">
            <circle cx="13" cy="4" r="3" />
            <path d="M2 8c4 3 18 3 22 0M9 11v6L4 30l5-1 4-8M17 11v6l1 4" />
            <path d="M17 21l11 10M28 21 17 31" />
          </svg>
          アクセシビリティ: 検討が必要です
        </StatusA11y>
        <StatusRight>
          <ViewBtn $on $w={74}>
            <svg width="26" height="26" viewBox="0 0 26 26" fill="#fff">
              <path d="M1 1h24v24H1zM4 4v5h5V4zm7 0v5h5V4zm7 0v5h5V4zM4 11v5h5v-5zm7 0v5h5v-5zm7 0v5h5v-5zM4 18v5h5v-5zm7 0v5h5v-5zm7 0v5h5v-5z" fillRule="evenodd" />
            </svg>
          </ViewBtn>
          <ViewBtn $w={70}>
            <svg width="28" height="26" viewBox="0 0 28 26" fill="none" stroke="#6d6d6d" strokeWidth="2.4">
              <rect x="1" y="1" width="26" height="24" />
              <rect x="7" y="5" width="14" height="16" />
              <path d="M9 9h10M9 13h10M9 17h10" />
            </svg>
          </ViewBtn>
          <ViewBtn $w={72}>
            <svg width="28" height="26" viewBox="0 0 28 26" fill="none" stroke="#6d6d6d" strokeWidth="2.4">
              <rect x="1" y="1" width="26" height="24" />
              <path d="M1 14h17V1M9 1v13" />
            </svg>
          </ViewBtn>
          <ZoomMark $ml={16}><svg width="16" height="6" viewBox="0 0 16 6"><rect width="16" height="5" fill="#6d6d6d" /></svg></ZoomMark>
          <ZoomTrack />
          <ZoomMark $ml={14}><svg width="16" height="16" viewBox="0 0 16 16"><path d="M8 0v16M0 8h16" stroke="#6d6d6d" strokeWidth="4" /></svg></ZoomMark>
          <ZoomPct>150%</ZoomPct>
        </StatusRight>
      </StatusBar>
    </Window>
  </Page>
);

export default App;
